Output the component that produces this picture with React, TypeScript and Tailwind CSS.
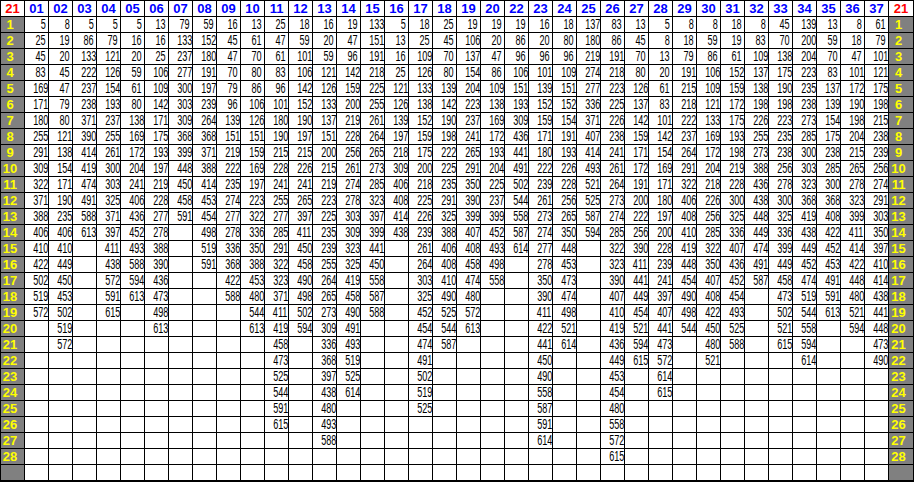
import React from 'react';

// column header -> values from row 1 down
const columns: [string, string][] = [
  ['01', '5 25 45 83 169 171 180 255 291 309 322 371 388 406 410 422 502 519 572'],
  ['02', '8 19 20 45 47 79 80 121 138 154 171 190 235 406 410 449 450 453 502 519 572'],
  ['03', '5 86 133 222 237 238 371 390 414 419 474 491 588 613'],
  ['04', '5 79 121 126 154 193 237 255 261 300 303 325 371 397 411 438 572 591 615'],
  ['05', '5 16 20 59 61 80 138 169 172 204 241 406 436 452 493 588 594 613'],
  ['06', '13 16 25 106 109 142 171 175 193 197 219 228 277 278 388 390 436 473 498 613'],
  ['07', '79 133 237 277 300 303 309 368 399 448 450 458 591'],
  ['08', '59 152 180 191 197 239 264 368 371 388 414 453 454 498 519 591'],
  ['09', '16 45 47 70 79 96 139 151 219 222 235 274 277 278 336 368 422 588'],
  ['10', '13 61 70 80 86 106 126 151 159 169 197 223 322 336 350 388 453 480 544 613'],
  ['11', '25 47 61 83 96 101 180 190 215 228 241 255 277 285 291 322 323 371 411 419 458 473 525 544 591 615'],
  ['12', '18 59 101 106 142 152 190 197 215 226 241 265 397 411 450 458 490 498 502 594'],
  ['13', '16 20 59 121 126 133 137 151 200 215 219 223 225 235 239 255 264 265 273 309 336 368 397 438 480 493 588'],
  ['14', '19 47 96 142 159 200 219 228 256 261 274 278 303 309 323 325 419 458 490 491 493 519 525 614'],
  ['15', '133 151 191 218 225 255 261 264 265 273 285 323 397 399 441 450 558 587 588'],
  ['16', '5 13 16 25 121 126 139 197 218 309 406 408 414 438'],
  ['17', '18 25 109 126 133 138 152 159 175 200 218 225 226 239 261 264 303 325 452 454 474 491 502 519 525'],
  ['18', '25 45 70 80 139 142 190 198 222 225 235 291 325 388 406 408 410 490 525 544 587'],
  ['19', '19 106 137 154 204 223 237 241 265 291 350 390 399 407 408 458 474 480 572 613'],
  ['20', '19 20 47 86 109 138 169 172 193 204 225 237 399 452 493 498 558'],
  ['22', '19 86 96 106 151 193 309 436 441 491 502 544 558 587 614'],
  ['23', '16 20 96 101 139 152 159 171 180 222 239 261 273 274 277 278 350 390 411 422 441 450 490 558 587 591 614'],
  ['24', '18 80 96 109 151 152 154 191 193 226 228 256 265 350 448 453 473 474 498 521 614'],
  ['25', '137 180 219 274 277 336 371 407 414 493 521 525 587 594'],
  ['26', '83 86 191 218 223 225 226 238 241 261 264 273 274 285 322 323 390 407 410 419 436 449 453 454 480 558 572 615'],
  ['27', '13 45 70 80 126 137 142 159 171 172 191 200 222 256 390 411 441 449 454 521 594 615'],
  ['28', '5 8 13 20 61 83 101 142 154 169 171 180 197 200 228 239 241 397 407 441 473 572 614 615'],
  ['29', '8 18 79 191 215 218 222 237 264 291 322 406 408 410 419 448 454 490 498 544'],
  ['30', '8 59 86 106 109 121 133 169 172 204 218 226 256 285 322 350 407 408 422 450 480 521'],
  ['31', '18 19 61 152 159 172 175 193 198 219 228 300 325 336 407 436 452 454 493 525 588'],
  ['32', '8 83 109 137 138 198 226 255 273 388 436 438 448 449 474 491 587'],
  ['33', '45 70 138 175 190 198 223 235 238 256 278 300 325 336 399 449 458 473 502 521 615'],
  ['34', '139 200 204 223 235 238 273 285 300 303 323 368 419 438 449 452 474 519 544 558 594 614'],
  ['35', '13 59 70 83 137 139 154 175 238 285 300 368 408 422 452 453 491 591 613'],
  ['36', '8 18 47 101 172 190 198 204 215 265 278 323 399 411 414 422 448 480 521 594'],
  ['37', '61 79 101 121 175 198 215 238 239 256 274 291 303 350 397 410 414 438 441 448 473 490'],
];

const data = columns.map(([h, s]) => ({ h, v: s.split(' ') }));
const rows = Array.from({ length: 29 }, (_, i) => i);

const SideCell = ({ label }: { label: string }) => (
  <div className="bg-[#808080] text-[#ffff00] font-bold text-[13px] leading-[15px] text-center pr-[5px]">
    {label}
  </div>
);

export default function App() {
  return (
    <div className="w-[914px] h-[482px] bg-black overflow-hidden">
      <div className="grid grid-cols-[repeat(37,23px)_24px] auto-rows-[15px] gap-px p-px font-['Liberation_Sans',Arial,sans-serif]">
        <div className="bg-white text-[#ff0000] font-bold text-[13px] leading-[15px] text-center">21</div>
        {data.map((c) => (
          <div key={c.h} className="bg-white text-[#0000ff] font-bold text-[13px] leading-[15px] text-center">
            {c.h}
          </div>
        ))}
        <div className="bg-white text-[#ff0000] font-bold text-[13px] leading-[15px] text-center">21</div>

        {rows.map((r) => (
          <React.Fragment key={r}>
            <SideCell label={r < 28 ? String(r + 1) : ''} />
            {data.map((c) => (
              <div key={c.h} className="bg-white text-black text-[14px] leading-[15px] text-right pr-[2px] overflow-hidden whitespace-nowrap">
                {c.v[r] && <span className="inline-block scale-x-65 origin-right">{c.v[r]}</span>}
              </div>
            ))}
            <SideCell label={r < 28 ? String(r + 1) : ''} />
          </React.Fragment>
        ))}
      </div>
    </div>
  );
}
